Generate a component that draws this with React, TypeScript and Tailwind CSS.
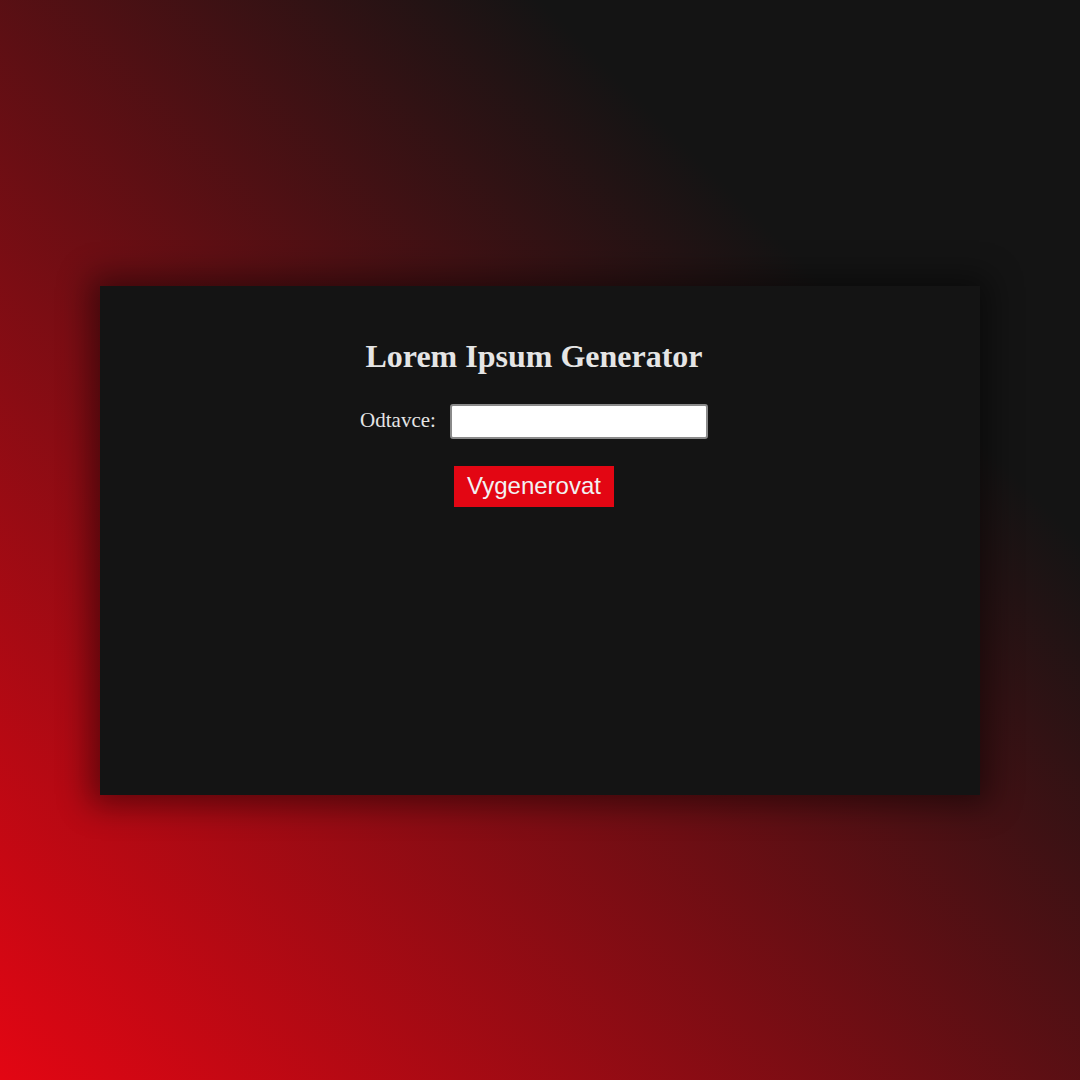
import React from 'react';

const App: React.FC = () => {
  return (
    <div className="min-h-screen flex items-center justify-center bg-[linear-gradient(45deg,#e30613_0%,#141414_75%)]">
      {/* Card */}
      <div className="w-[880px] h-[509px] bg-[#141414] shadow-[0_0_30px_10px_rgba(0,0,0,0.45)] pt-[38px] pl-[20px] pr-[32px] flex flex-col items-center font-['Liberation_Serif',serif] text-[#e5e5e5]">
        <h1 className="text-[32px] font-bold leading-[64px]">Lorem Ipsum Generator</h1>
        <div className="mt-[16px] flex items-center gap-[14px]">
          <label htmlFor="count" className="text-[21px]">Odtavce:</label>
          <input
            id="count"
            type="text"
            className="w-[258px] h-[35px] bg-white border-2 border-[#8a8a8a] rounded-[3px] px-2 text-black"
          />
        </div>
        <button className="mt-[27px] w-[160px] h-[41px] bg-[#e30613] text-[#f2f2f2] text-[24px] font-['Liberation_Sans',sans-serif]">
          Vygenerovat
        </button>
      </div>
    </div>
  );
};

export default App;
